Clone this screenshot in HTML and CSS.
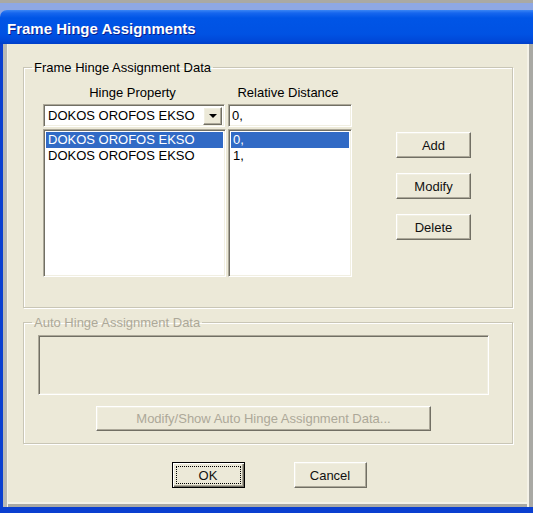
FILE: index.html
```html
<!DOCTYPE html>
<html lang="en">
<head>
  <meta charset="UTF-8">
  <title>Frame Hinge Assignments</title>
  <link rel="stylesheet" href="styles.css">
</head>
<body>

  <div class="screen">
    <div class="window">

      <!-- Caption -->
      <div class="titlebar">
        <span class="title">Frame Hinge Assignments</span>
      </div>

      <div class="client">

        <fieldset class="group group-main">
          <legend>Frame Hinge Assignment Data</legend>
          <div class="hinge-row">

            <div class="col col-prop">
              <div class="col-head">Hinge Property</div>
              <div class="combo sunken">
                <span class="combo-text">DOKOS OROFOS EKSO</span>
                <span class="combo-btn raised"><span class="arrow"></span></span>
              </div>
              <div class="list sunken">
                <div class="item selected">DOKOS OROFOS EKSO</div>
                <div class="item">DOKOS OROFOS EKSO</div>
              </div>
            </div>

            <div class="col col-dist">
              <div class="col-head">Relative Distance</div>
              <div class="field sunken">0,</div>
              <div class="list sunken">
                <div class="item selected">0,</div>
                <div class="item">1,</div>
              </div>
            </div>

            <div class="actions">
              <button class="btn raised">Add</button>
              <button class="btn raised">Modify</button>
              <button class="btn raised">Delete</button>
            </div>

          </div>
        </fieldset>

        <fieldset class="group group-auto">
          <legend class="disabled">Auto Hinge Assignment Data</legend>
          <div class="auto-body">
            <div class="auto-box sunken"></div>
            <div class="auto-actions">
              <button class="btn raised btn-wide" disabled>Modify/Show Auto Hinge Assignment Data...</button>
            </div>
          </div>
        </fieldset>

        <div class="footer">
          <button class="btn raised btn-small btn-default"><span class="focus">OK</span></button>
          <button class="btn raised btn-small">Cancel</button>
        </div>

      </div>
    </div>
  </div>

</body>
</html>
```

FILE: styles.css
```css
* {
  margin: 0;
  padding: 0;
  box-sizing: border-box;
}

body {
  width: 533px;
  height: 516px;
  overflow: hidden;
  background: #fff;
  font-family: "Liberation Sans", Arial, sans-serif;
  font-size: 13px;
  color: #000;
}

.screen {
  height: 516px;
  padding-top: 3px;
  background: linear-gradient(#a9a9a4 0, #a9a9a4 3px, #fff 3px);
}

.window {
  height: 510px;
  padding-top: 7px;
  background: #8ea8e4;
  display: flex;
  flex-direction: column;
}

/* Caption */
.titlebar {
  height: 34px;
  border-top-left-radius: 7px;
  background: linear-gradient(#3b86f4 0, #1666ee 3px, #0055e6 8px, #0052e3 24px, #0048d8 31px, #003fc8 34px);
  padding: 0 0 0 7px;
  display: flex;
  align-items: center;
}

.title {
  font-family: "Liberation Sans", Arial, sans-serif;
  font-weight: bold;
  font-size: 15px;
  color: #fff;
  text-shadow: 1px 1px 0 #0a1f8f;
  margin-top: 3px;
}

.client {
  flex: 1;
  background: #ece9d8;
  border-left: 3px solid #0a3fd0;
  box-shadow: inset 4px 0 0 #b9b9b4, inset 5px 0 0 #f4f2e8, inset -4px 0 0 #a9a9a4, inset -6px 0 0 #f4f2e8, inset 0 -3px 0 #a9a9a4, inset 0 -5px 0 #f4f2e8;
  border-bottom: 6px solid #0a3fd0;
  padding: 16px 20px 0 20px;
  display: flex;
  flex-direction: column;
}

/* 3D edges */
.sunken {
  border: 1px solid;
  border-color: #aca899 #fff #fff #aca899;
  box-shadow: inset 1px 1px 0 #716f64, inset -1px -1px 0 #f1efe2;
  background: #fff;
}

.raised {
  border: 1px solid;
  border-color: #fff #716f64 #716f64 #fff;
  box-shadow: inset -1px -1px 0 #aca899, inset 1px 1px 0 #f1efe2;
  background: #ece9d8;
}

/* Group boxes */
.group {
  border: 1px solid #c9c6b6;
  box-shadow: inset 1px 1px 0 #fff, 1px 1px 0 #fff;
  margin: 0;
  padding: 0;
}

.group legend {
  margin-left: 8px;
  padding: 0 2px;
  line-height: 15px;
  color: #000;
}

.group legend.disabled {
  color: #aca899;
}

.group-main {
  height: 248px;
}

.hinge-row {
  display: flex;
  padding: 10px 0 0 19px;
}

.col {
  display: flex;
  flex-direction: column;
}

.col-prop {
  width: 183px;
}

.col-dist {
  width: 124px;
  margin-left: 2px;
}

.col-head {
  text-align: center;
  line-height: 15px;
  height: 19px;
  padding-right: 4px;
}

.combo {
  height: 23px;
  display: flex;
  align-items: center;
  padding: 2px 2px 2px 4px;
  margin-right: 1px;
}

.combo-text {
  flex: 1;
  white-space: nowrap;
}

.combo-btn {
  width: 19px;
  height: 18px;
  display: flex;
  align-items: center;
  justify-content: center;
}

.arrow {
  width: 0;
  height: 0;
  border-left: 4px solid transparent;
  border-right: 4px solid transparent;
  border-top: 4px solid #000;
  margin-top: 1px;
}

.field {
  height: 23px;
  padding: 3px 3px;
  line-height: 16px;
}

.list {
  height: 148px;
  margin-top: 2px;
  padding: 2px;
}

.item {
  height: 16px;
  line-height: 16px;
  padding-left: 2px;
  white-space: nowrap;
}

.item.selected {
  background: #316ac5;
  color: #fff;
}

.actions {
  margin: 47px 0 0 44px;
  display: flex;
  flex-direction: column;
  gap: 15px;
}

/* Buttons */
.btn {
  font-family: "Liberation Sans", Arial, sans-serif;
  font-size: 13px;
  font-weight: normal;
  color: #111;
  width: 75px;
  height: 26px;
  display: flex;
  align-items: center;
  justify-content: center;
}

.btn:disabled {
  color: #aca899;
}

.btn-wide {
  width: 335px;
  height: 25px;
}

.btn-small {
  width: 73px;
}

.group-auto {
  margin-top: 7px;
  height: 129px;
}

.auto-body {
  padding: 5px 23px 0 14px;
}

.auto-box {
  height: 60px;
  background: #ece9d8;
}

.auto-actions {
  display: flex;
  justify-content: center;
  margin-top: 11px;
}

.footer {
  display: flex;
  justify-content: center;
  gap: 49px;
  margin-top: 18px;
  padding-left: 2px;
}

.btn-default {
  border: 1px solid #000;
  box-shadow: inset 1px 1px 0 #fff, inset -1px -1px 0 #716f64, inset -2px -2px 0 #aca899;
  padding: 3px;
}

.focus {
  width: 100%;
  height: 100%;
  border: 1px dotted #000;
  display: flex;
  align-items: center;
  justify-content: center;
}
```
